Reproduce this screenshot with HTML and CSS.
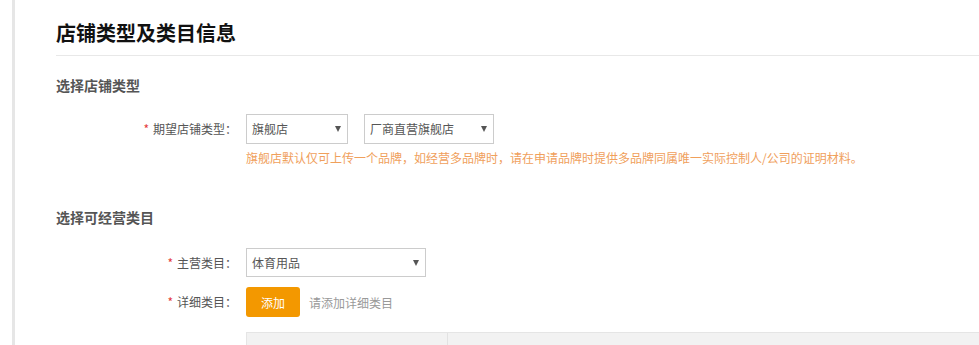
FILE: index.html
```html
<!DOCTYPE html>
<html lang="zh-CN">
  <head>
    <meta charset="UTF-8" />
    <title>店铺类型及类目信息</title>
    <link rel="stylesheet" href="styles.css">
  </head>
  <body>
    <div class="page">
      <h2 class="page-title">店铺类型及类目信息</h2>

      <div class="section">
        <h3 class="section-title">选择店铺类型</h3>
        <div class="form-row">
          <label class="form-label"><em>*</em>期望店铺类型：</label>
          <div class="form-field">
            <div class="selects">
              <div class="select select-sm">旗舰店<span class="arrow"></span></div>
              <div class="select select-md">厂商直营旗舰店<span class="arrow"></span></div>
            </div>
            <p class="tip">旗舰店默认仅可上传一个品牌，如经营多品牌时，请在申请品牌时提供多品牌同属唯一实际控制人/公司的证明材料。</p>
          </div>
        </div>
      </div>

      <div class="section">
        <h3 class="section-title">选择可经营类目</h3>
        <div class="form-row row-tight">
          <label class="form-label"><em>*</em>主营类目：</label>
          <div class="form-field">
            <div class="select select-lg">体育用品<span class="arrow"></span></div>
          </div>
        </div>
        <div class="form-row">
          <label class="form-label"><em>*</em>详细类目：</label>
          <div class="form-field inline">
            <button class="btn-add">添加</button>
            <span class="placeholder">请添加详细类目</span>
          </div>
        </div>
        <div class="form-row">
          <div class="form-label"></div>
          <div class="table-head">
            <div class="th th-first"></div>
            <div class="th"></div>
          </div>
        </div>
      </div>
    </div>
  </body>
</html>
```

FILE: styles.css
```css
/* base */
body {
  margin: 0;
  font-family: "Noto Sans CJK SC", "Liberation Sans", sans-serif;
  font-size: 12px;
  color: #555;
  background: #fff;
  overflow: hidden;
}

.page {
  margin-left: 12px;
  border-left: 3px solid #e6e6e6;
  padding-left: 41px;
  height: 345px;
  box-sizing: border-box;
}

.page-title {
  margin: 0;
  padding-top: 18px;
  padding-bottom: 7px;
  font-size: 20px;
  line-height: 30px;
  font-weight: bold;
  color: #111;
  border-bottom: 1px solid #e8e8e8;
}

.section-title {
  margin: 0;
  font-size: 14px;
  line-height: 20px;
  font-weight: bold;
  color: #555;
  padding-top: 19px;
  padding-bottom: 19px;
}

.section + .section .section-title {
  padding-top: 29px;
  padding-bottom: 21px;
}

.form-row {
  display: flex;
  align-items: flex-start;
  margin-bottom: 11px;
}

.form-row.row-tight {
  margin-bottom: 9px;
}

.form-label {
  width: 190px;
  flex: none;
  box-sizing: border-box;
  padding-right: 9px;
  text-align: right;
  line-height: 30px;
  color: #555;
}

.form-label em {
  font-style: normal;
  color: #e4393c;
  margin-right: 4px;
}

.form-field.inline {
  display: flex;
  align-items: center;
}

.selects {
  display: flex;
  gap: 16px;
}

.select {
  position: relative;
  box-sizing: border-box;
  height: 30px;
  line-height: 28px;
  border: 1px solid #ccc;
  padding-left: 5px;
  color: #555;
  background: #fff;
}

.select-sm { width: 102px; }
.select-md { width: 130px; }
.select-lg { width: 180px; height: 29px; line-height: 27px; }

/* small down triangle */
.arrow {
  position: absolute;
  right: 6px;
  top: 50%;
  margin-top: -3px;
  width: 0;
  height: 0;
  border-left: 3.5px solid transparent;
  border-right: 3.5px solid transparent;
  border-top: 6px solid #555;
}

.tip {
  margin: 5px 0 0;
  line-height: 18px;
  color: #f0a05c;
}

.btn-add {
  width: 54px;
  height: 30px;
  border: 0;
  border-radius: 3px;
  background: #f39800;
  color: #fff;
  font-family: inherit;
  font-size: 12px;
  padding: 0;
}

.placeholder {
  margin-left: 9px;
  color: #999;
}

.table-head {
  flex: 1;
  display: flex;
  height: 30px;
  margin-top: 4px;
  background: #f2f2f2;
  border-top: 1px solid #e5e5e5;
  border-left: 1px solid #e5e5e5;
}

.th-first {
  width: 200px;
  border-right: 1px solid #e2e2e2;
}
```
